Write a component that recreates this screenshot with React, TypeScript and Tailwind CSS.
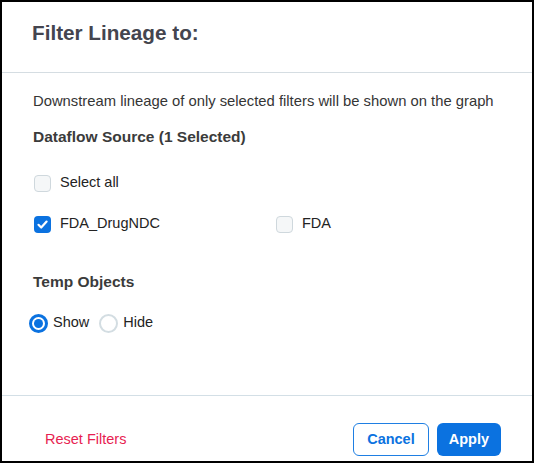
import React from "react";

const font = { fontFamily: '"Liberation Sans", Arial, sans-serif' };

function Checkbox({ checked, label }: { checked?: boolean; label: string }) {
  return (
    <label className="flex items-center h-5 gap-[9px] text-[14.5px] text-[#232323]">
      {checked ? (
        <span className="w-[17px] h-[17px] rounded-[4px] bg-[#0b72e0] flex items-center justify-center">
          <svg width="13" height="13" viewBox="0 0 13 13" fill="none">
            <path d="M2.5 6.8l2.7 2.7L10.6 3.6" stroke="#fff" strokeWidth="2.2" strokeLinecap="round" strokeLinejoin="round" />
          </svg>
        </span>
      ) : (
        <span className="w-[17px] h-[17px] rounded-[4px] border-[1.5px] border-[#cfd8dd] bg-[#f5f7f8]" />
      )}
      <span>{label}</span>
    </label>
  );
}

function Radio({ checked, label }: { checked?: boolean; label: string }) {
  return (
    <label className="flex items-center h-5 gap-[5px] text-[14.5px] text-[#232323]">
      {checked ? (
        <span className="w-[19px] h-[19px] rounded-full border-[3px] border-[#0b72e0] flex items-center justify-center">
          <span className="w-[9px] h-[9px] rounded-full bg-[#0b72e0]" />
        </span>
      ) : (
        <span className="w-[19px] h-[19px] rounded-full border-2 border-[#d3dde2] bg-white" />
      )}
      <span>{label}</span>
    </label>
  );
}

export default function App() {
  return (
    <div style={font} className="w-[534px] h-[463px] border-2 border-black bg-white flex flex-col">
      {/* header */}
      <div className="h-[71px] shrink-0 border-b border-[#d5dde2] pl-[30px] pt-[19px]">
        <h1 className="text-[20.7px] leading-6 font-bold text-[#44454f]">Filter Lineage to:</h1>
      </div>

      {/* body */}
      <div className="flex-1 pl-[31px] pt-[18px]">
        <p className="text-[14.8px] leading-5 text-[#353535]">
          Downstream lineage of only selected filters will be shown on the graph
        </p>
        <h2 className="mt-4 text-[15.5px] leading-5 font-bold text-[#3b3b3b]">Dataflow Source (1 Selected)</h2>

        <div className="mt-[26px] pl-[1px]">
          <Checkbox label="Select all" />
          <div className="mt-[21px] grid grid-cols-[242px_1fr]">
            <Checkbox checked label="FDA_DrugNDC" />
            <Checkbox label="FDA" />
          </div>
        </div>

        <h2 className="mt-[38px] text-[15.5px] leading-5 font-bold text-[#3b3b3b]">Temp Objects</h2>

        <div className="mt-[21px] -ml-[4px] flex items-center gap-[10px]">
          <Radio checked label="Show" />
          <Radio label="Hide" />
        </div>
      </div>

      {/* footer */}
      <div className="h-[66px] shrink-0 border-t border-[#d3dfe6] pl-[43px] pr-[31px] pt-[27px] flex items-start justify-between">
        <button className="h-[33px] text-[14.5px] text-[#e71e51]">Reset Filters</button>
        <div className="flex gap-2">
          <button className="h-[33px] px-[13px] rounded-[6px] border border-[#1f7fe3] text-[14.5px] font-bold text-[#0b72e0]">
            Cancel
          </button>
          <button className="h-[33px] px-3 rounded-[6px] bg-[#0b72e0] text-[14.5px] font-bold text-white">
            Apply
          </button>
        </div>
      </div>
    </div>
  );
}
